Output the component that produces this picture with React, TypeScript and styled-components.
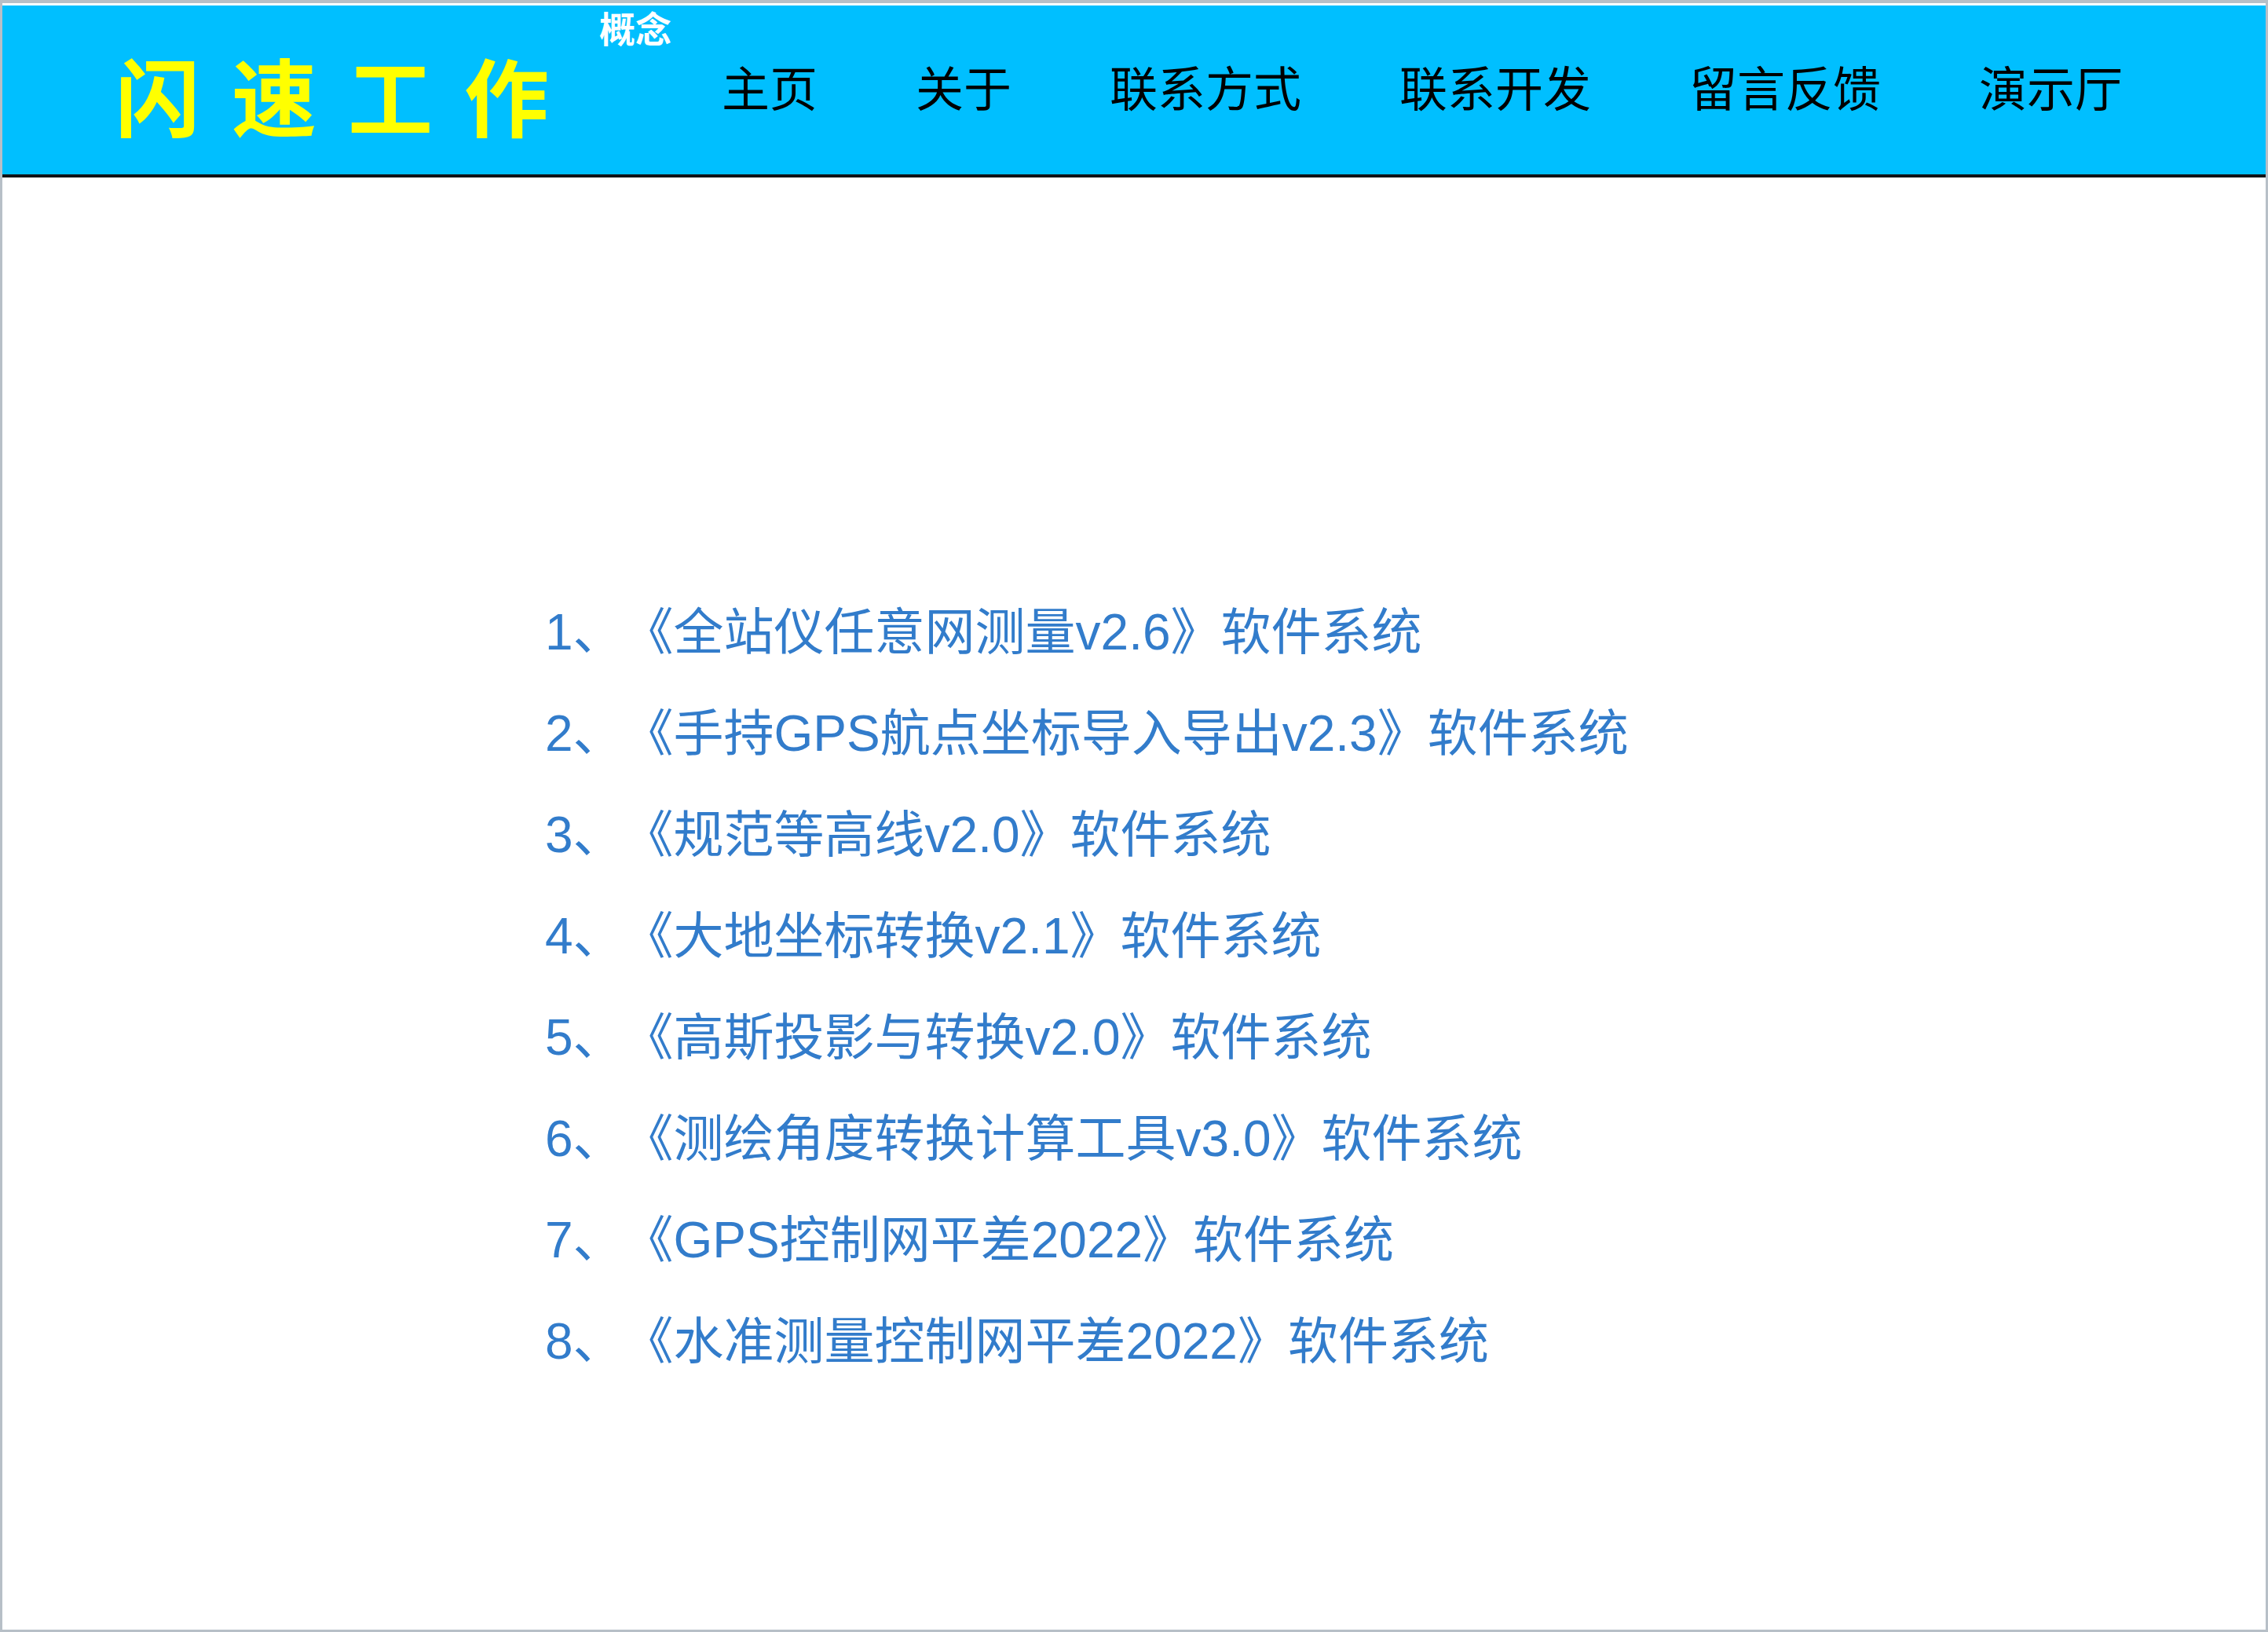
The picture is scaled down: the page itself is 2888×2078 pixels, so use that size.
import React from "react";
import styled, {createGlobalStyle} from "styled-components";

const GlobalStyle = createGlobalStyle`
    html, body {
        margin: 0;
        padding: 0;
        background: #ffffff;
    }
`;

const cjkFont = `"Liberation Sans", "Noto Sans CJK SC", sans-serif`;

const SFrame = styled.div`
    box-sizing: border-box;
    width: 2888px;
    height: 2078px;
    border: 3px solid #b7bfc7;
    border-top-width: 4px;
    background: #ffffff;
    display: flex;
    flex-direction: column;
    font-family: ${cjkFont};
`;

const SHeader = styled.header`
    box-sizing: border-box;
    margin-top: 3px;
    height: 219px;
    background-color: #00bfff;
    border-bottom: 4px solid #111418;
    display: flex;
    align-items: center;
    padding-left: 144px;
`;

const SLogo = styled.div`
    font-family: "Noto Sans CJK SC", sans-serif;
    font-size: 108px;
    font-weight: 700;
    line-height: 1;
    letter-spacing: 40px;
    color: #ffff00;
    margin-top: 8px;
    white-space: nowrap;
`;

const STag = styled.div`
    align-self: flex-start;
    font-family: "Noto Sans CJK SC", sans-serif;
    font-size: 46px;
    font-weight: 700;
    line-height: 1;
    color: #ffffff;
    margin-top: 4px;
    margin-left: 24px;
`;

const SNav = styled.nav`
    display: flex;
    gap: 125px;
    margin-left: 64px;
    margin-bottom: 10px;
`;

const SNavItem = styled.a`
    font-family: "Noto Sans CJK SC", sans-serif;
    font-size: 61px;
    line-height: 1;
    color: #000000;
    text-decoration: none;
    white-space: nowrap;
`;

const SMain = styled.main`
    flex: 1;
    padding: 515px 0 0 691px;
`;

const SRow = styled.div`
    font-size: 64px;
    line-height: 129px;
    height: 129px;
    color: #327ccb;
    white-space: pre;
    text-spacing-trim: space-all;
`;

const navItems = ["主页", "关于", "联系方式", "联系开发", "留言反馈", "演示厅"];

const software = [
    "全站仪任意网测量v2.6",
    "手持GPS航点坐标导入导出v2.3",
    "规范等高线v2.0",
    "大地坐标转换v2.1",
    "高斯投影与转换v2.0",
    "测绘角度转换计算工具v3.0",
    "GPS控制网平差2022",
    "水准测量控制网平差2022",
];

const App = () => {
    return (
        <>
            <GlobalStyle/>
            <SFrame>
                <SHeader>
                    <SLogo>闪速工作</SLogo>
                    <STag>概念</STag>
                    <SNav>
                        {navItems.map((item) => (
                            <SNavItem key={item} href="#">{item}</SNavItem>
                        ))}
                    </SNav>
                </SHeader>
                <SMain>
                    {software.map((name, i) => (
                        <SRow key={name}>{`${i + 1}、《${name}》软件系统`}</SRow>
                    ))}
                </SMain>
            </SFrame>
        </>
    );
}

export default App
